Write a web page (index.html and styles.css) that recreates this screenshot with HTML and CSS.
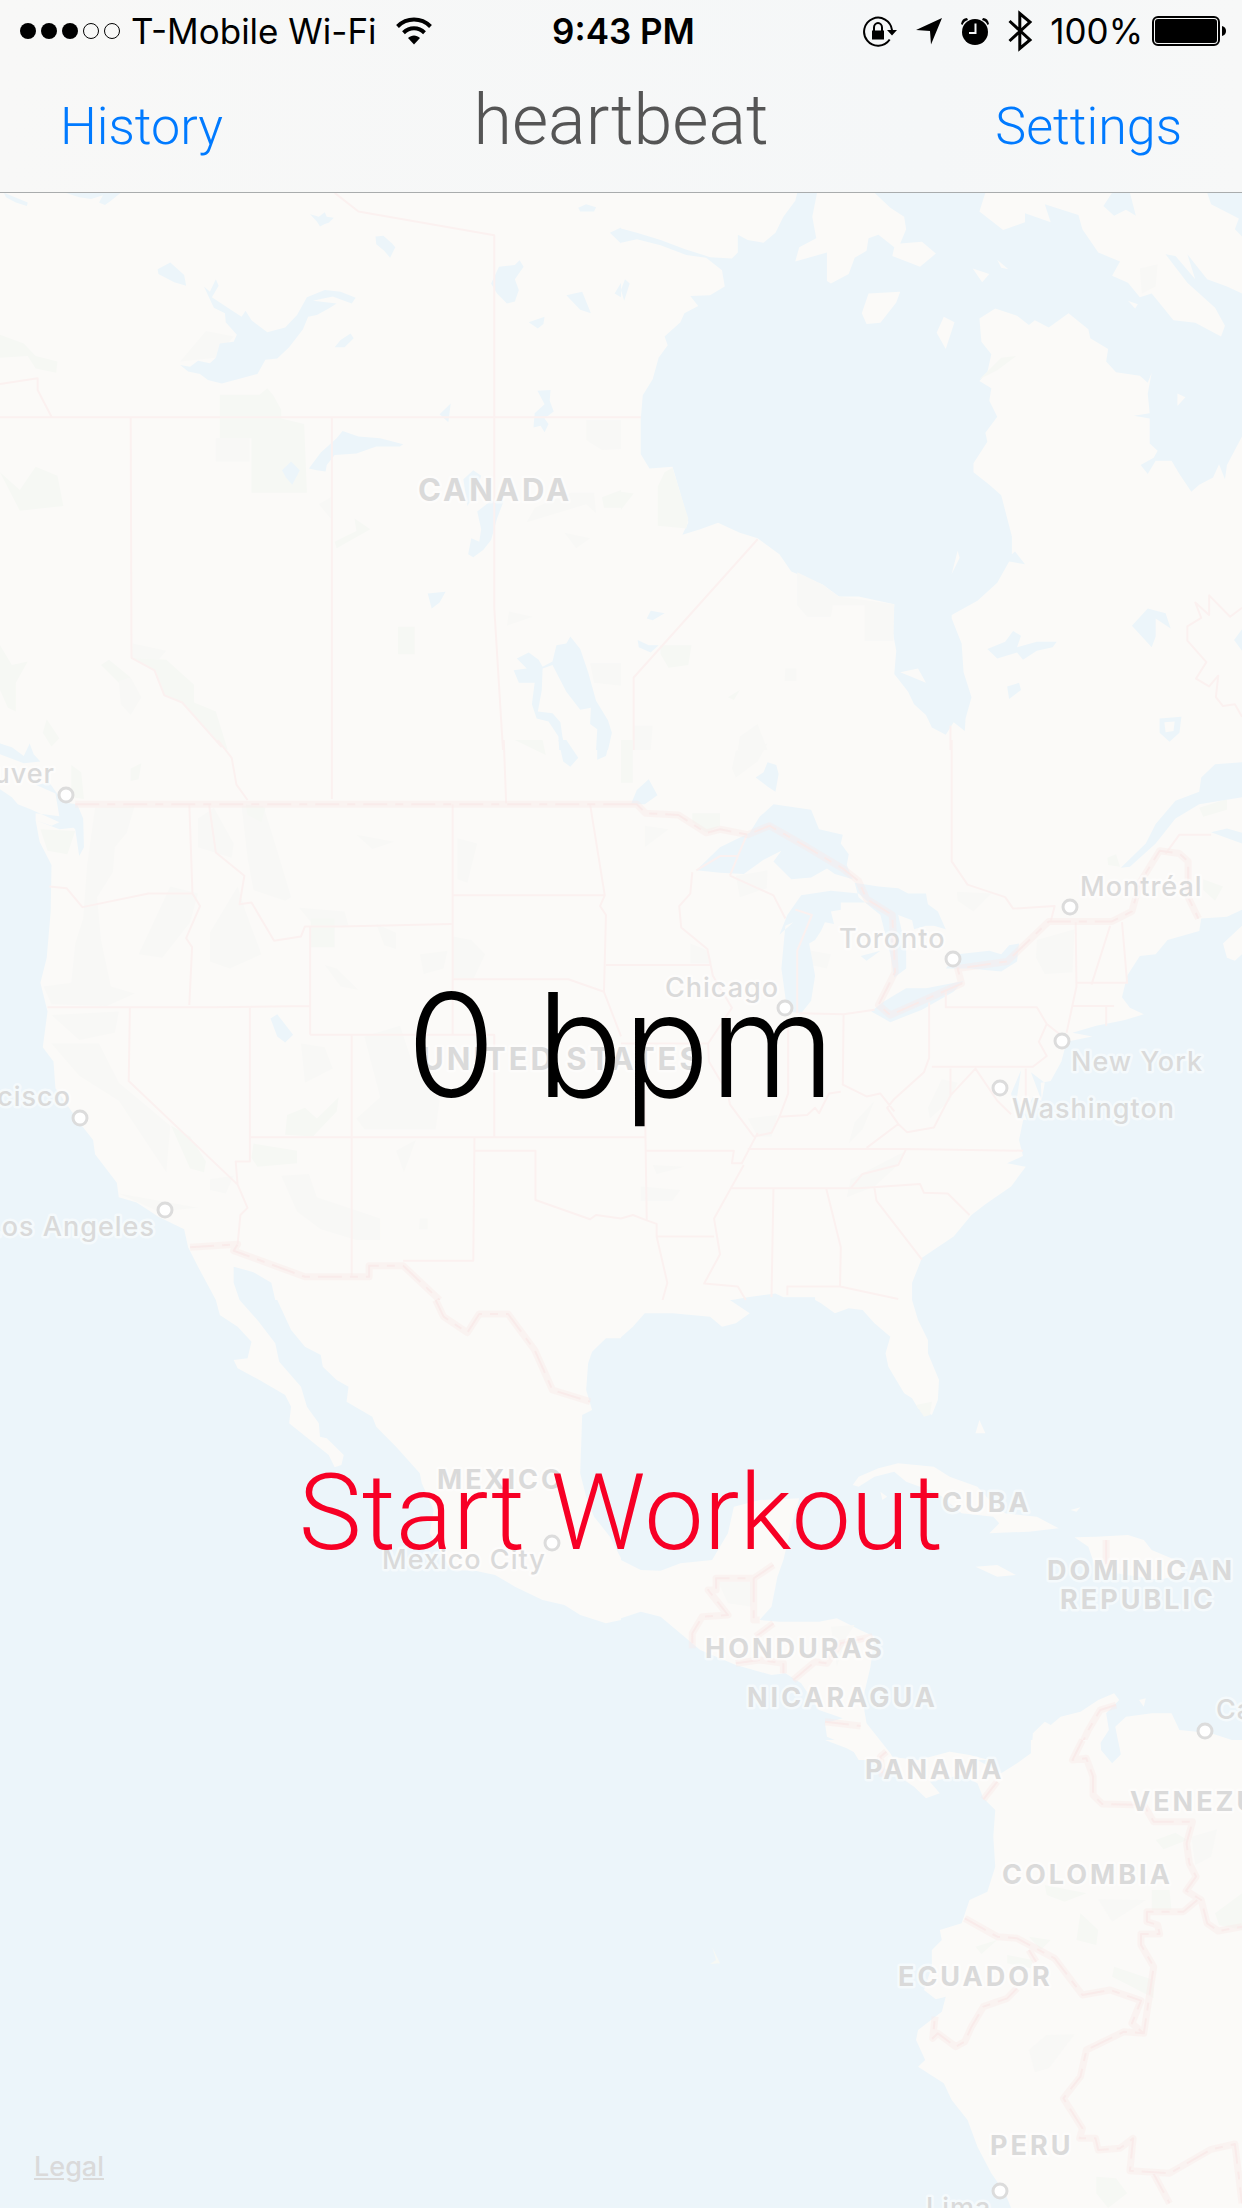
FILE: index.html
```html
<!DOCTYPE html>
<html lang="en">
<head>
<meta charset="utf-8">
<meta name="viewport" content="width=device-width, initial-scale=1">
<title>heartbeat</title>
<link rel="stylesheet" href="styles.css">
</head>
<body>
<div class="screen">
  <svg class="map" viewBox="0 0 1242 2208" preserveAspectRatio="xMidYMid slice" role="img" aria-label="Map of North America">
    <rect class="land" width="1242" height="2208"/>
    <rect class="water" y="1300" width="1242" height="908"/>

    <!-- Northern Canada, west -->
    <g transform="translate(0 190) scale(.39605 .35714)">
      <path class="park" d="M555 573H655L675 555 690 575 710 615V640L768 655 775 848H635V695H555ZM0 405L60 430 90 465 145 480 142 512 90 500 70 465 0 470ZM0 790L50 840 90 775 145 800 160 885 50 898ZM845 985L900 955 895 920 935 950 850 1003ZM1005 1223H1047V1300H1005ZM0 1275L30 1330 70 1320 40 1380V1460L20 1450 0 1400ZM332 1310L420 1315 490 1385 490 1435 545 1460 575 1568 560 1560 460 1435 415 1415 390 1345ZM1520 860L1568 840V890H1525ZM118 1482L150 1535 130 1558 108 1520ZM255 1330L275 1315 330 1365 300 1380Z"/>
      <path class="hill" d="M455 480L520 395 590 410 545 470ZM545 695H630V760H545ZM335 1270L420 1290 400 1315 332 1310ZM300 1375L330 1365 357 1420 330 1470 305 1440ZM1480 645H1568V725L1520 728 1480 700ZM1440 848H1500L1505 905 1480 880 1330 930 1350 890ZM805 880L835 860V920ZM1285 1180L1345 1195 1280 1220ZM1425 960L1490 975 1455 1003ZM1490 1325H1568V1388L1500 1380Z"/>
      <path class="water" d="M10 8L70 35 68 45 40 35 15 20ZM165 8H305L280 30 265 42 250 35 260 15 230 25 200 20ZM783 68L805 75 820 62 825 75 843 78 830 92 820 95 808 102 800 88ZM948 130L968 128 990 150 998 160 985 190 970 170 950 152ZM398 222L430 203 465 238 470 268 440 258 400 235Z"/>
      <path class="water" d="M515 270L530 285 545 250 552 268 535 300 575 330 610 355 620 338 635 365 675 398 720 385 750 350 775 300 820 280 860 285 898 302 888 318 840 298 790 310 850 318 830 332 800 350 778 355 765 390 730 440 700 472 670 475 650 515 600 530 560 542 525 532 505 515 475 508 455 490 480 495 500 478 530 485 545 470 555 430 590 425 598 405 570 370 568 345 540 330Z"/>
      <path class="water" d="M845 440L860 420 885 402 893 415 870 440ZM1240 262L1260 215 1300 210 1312 197 1322 215 1300 250 1310 280 1300 312 1280 318 1255 290ZM1430 295L1470 285 1492 345 1465 335ZM1335 370L1375 355 1372 375 1358 388ZM1460 50L1480 40 1505 48 1500 60 1465 60ZM1540 120L1568 105V150ZM1552 290L1568 260V300ZM1357 562L1390 560 1388 590 1398 620 1375 640 1385 655 1375 678 1365 660 1347 665 1350 625 1375 600ZM1110 628L1138 598 1132 650ZM780 780L810 735 850 695 865 675 905 690 960 695 1018 712 1010 718 950 718 900 738 845 742 825 770 822 788 800 785ZM712 785L735 760 757 785 738 825 722 805ZM1170 810L1195 785 1215 800 1200 850 1180 885ZM1205 900L1240 870H1272L1255 920 1240 980 1220 1008 1195 1028 1182 1020 1190 975 1210 985 1215 950ZM1080 1130L1125 1125 1110 1155 1090 1172Z"/>
      <path class="water" d="M1305 1312L1335 1295 1360 1315 1370 1335 1395 1320 1405 1275 1430 1270 1440 1250 1465 1285 1485 1350 1505 1430 1535 1485 1545 1520 1535 1568H1505L1508 1510 1490 1495 1492 1450 1465 1455 1430 1405 1395 1330 1370 1340 1368 1400 1358 1460 1395 1465 1415 1490 1420 1530 1428 1568H1412L1410 1530 1385 1488 1355 1480 1343 1440 1350 1380 1310 1380 1297 1345 1330 1340ZM0 1550L25 1565 0 1568Z"/>
      <path class="state" d="M0 543L95 527V560L130 635M0 636H1568M330 636L332 1310 390 1345 415 1415 460 1435 560 1560M838 636V1568M845 8L905 60 1248 127V1170L1270 1568"/>
    </g>

    <!-- Hudson Bay -->
    <g transform="translate(621 190) scale(.39605 .35714)">
      <path class="water" d="M445 8L440 30 410 75 390 120 360 148 320 140 295 125V175L280 192 225 188 160 165 100 140 40 120 0 108V148L40 138 100 155 165 182 215 190 255 225 262 270 225 295 175 297 195 325 160 345 150 370 110 410 118 435 95 470 80 530 55 575 50 640V740L72 780 130 775 150 850 170 930 155 965 200 950 245 932 300 960 345 975 400 1020 430 1068 510 1105 550 1138 600 1138 690 1160 685 1230 695 1290 690 1355 725 1405 740 1440 770 1470 785 1505 820 1525 840 1490 868 1515 870 1480 885 1420 865 1350 860 1270 835 1200V1190L900 1150 950 1100 980 1040 1020 1048 995 1012 987 1020V970L960 855 930 825 890 790V765L925 705 920 680 950 635 930 590 935 555 905 535 925 510 935 460 910 425 905 360 945 332 1000 352 1030 378 1045 365 1080 385 1130 345 1180 390 1185 415 1230 445 1225 480 1250 510 1310 520 1330 540 1340 512 1330 570 1335 625 1295 632 1335 640V710L1355 730 1345 750 1312 770 1330 795 1350 758H1390L1410 795 1440 845 1460 825 1495 805 1510 768 1525 810 1530 770 1568 690V290L1530 270 1480 250 1430 180 1450 250 1400 185 1375 180 1430 260 1500 330 1525 380 1515 410 1450 372 1395 365 1340 290 1310 300 1280 260 1240 240 1260 200 1205 175 1165 110 1155 70 1070 40 1085 90 1020 65V90L965 112 905 60 920 8H640L680 50 715 75 720 110 705 150 760 145 795 178 755 215 685 185 690 160 650 125 625 135 620 170 590 190 575 235 530 262 520 255V175L440 200 450 160 493 135 483 75 495 8ZM1480 8L1490 40 1560 80 1550 110 1568 130V8ZM1240 8L1218 45 1245 72 1275 55 1300 72 1285 8ZM925 1285L970 1265 990 1235 1010 1248 1000 1280 1050 1265H1100L1090 1280 1050 1290 1015 1315 1000 1295 950 1312ZM1290 1220L1330 1172 1375 1185 1388 1228 1350 1200V1250L1340 1280ZM975 1390L1005 1380 1010 1400 980 1425ZM1360 1480L1415 1475 1410 1520 1385 1545 1360 1520ZM65 1200L75 1178 110 1185 80 1205ZM42 1260L70 1275H95L75 1295 45 1280ZM1548 1260L1568 1230V1290ZM0 280L10 250 22 262 8 310Z"/>
      <path class="land" d="M625 290L705 285 695 315 655 372 620 375 608 345ZM815 355L842 370 820 445 797 400ZM888 220L930 235 912 258ZM950 195L978 222 960 218ZM705 1350L750 1340 770 1380ZM850 1010L855 1030 835 1075ZM1405 570L1425 580 1405 605ZM1280 310L1305 320 1298 332ZM1372 1490L1398 1488 1395 1515 1375 1518Z"/>
      <path class="park" d="M110 790L130 778 150 850 170 920 165 948 93 940V830ZM905 530L960 470 998 465 950 505ZM0 845L32 850 0 895ZM100 1275H178L170 1330 120 1338 100 1300ZM270 1420L300 1400 285 1428Z"/>
      <path class="hill" d="M445 1070L510 1105 550 1138 690 1160 688 1262H615V1163H535L530 1195H470L445 1163ZM415 1340H443V1375H413ZM1310 220L1355 208 1350 270 1315 290ZM295 1568L300 1530 345 1495 370 1568ZM30 1500L80 1500 75 1568H30Z"/>
      <path class="state" d="M0 636H50M345 978L32 1365V1568M832 1500V1568M1568 1170L1538 1195 1485 1135V1190L1450 1155 1465 1198 1430 1222V1262L1478 1322 1452 1368 1485 1390 1508 1360 1502 1420 1520 1445 1550 1440 1568 1475"/>
    </g>

    <!-- Western United States -->
    <g transform="translate(0 740) scale(.39605 .35714)">
      <path class="hill" d="M240 190L340 185 320 260 290 300 285 370 245 440 255 560 280 690 340 710 270 745 130 740 110 690 180 680 190 570 210 500 220 350ZM500 220L540 190 590 290 585 330 500 300ZM610 185H665L700 310 735 440 720 450 640 420 625 330ZM530 540L600 410 620 480 660 600 580 640 530 620ZM430 410L500 430 480 510 410 610 350 600ZM755 470L870 480 880 520 800 530ZM950 515L1000 540V585L970 575ZM1060 600L1130 590 1120 640 1070 655ZM1143 550L1190 560 1225 600 1195 670H1143ZM1155 275L1205 290 1180 400 1155 390ZM900 265L995 285 940 305ZM130 770L300 760 290 820 200 840ZM130 850L250 850 300 960 430 1080 420 1210 300 1010 200 940ZM300 1270L500 1310 400 1320ZM530 1230L590 1220 570 1270 530 1260ZM710 1220L780 1215 800 1280 960 1340V1400L900 1400 810 1370 750 1320ZM920 830L1010 800 1040 900 1110 1010 1100 1090 920 1090 900 1060 960 1000ZM1000 1150L1050 1120 1020 1210ZM760 850L820 860 840 920 770 960ZM1060 1340H1080V1370H1058ZM820 630L850 640 905 700 860 690Z"/>
      <path class="park" d="M102 250L190 255 170 320 120 310ZM785 500H845V580H785ZM180 70L205 90 212 165 180 160ZM330 80L357 65 350 110 330 115ZM725 1050L770 1030 800 1060 855 1000 850 1040 790 1110 720 1105ZM640 1130L750 1150V1185L650 1195 635 1170ZM432 1080L480 1110 520 1180 515 1210 480 1200ZM620 180L670 190 660 230 625 210ZM1300 0H1370L1378 42Z"/>
      <path class="water" d="M0 138L30 160 45 180 80 195 150 230 130 240 90 225 100 285 130 350 128 480 118 610 102 680 120 760 108 860 135 900 140 975 200 1070 235 1120 240 1160 295 1240 300 1280 345 1295 400 1335 465 1370 475 1420 500 1475 545 1568H0ZM90 125L140 150 150 215 190 250 200 325 212 300 210 220 195 180 160 175 125 120ZM90 225L150 250 190 245 160 215 90 205ZM0 10L30 20 60 45 75 10 85 40 102 60 60 65 0 40ZM683 780L700 768 740 825 720 847 700 830ZM590 1475L640 1490 685 1520 695 1568H605L590 1520ZM1410 0H1430L1460 50 1440 75 1422 60ZM1508 0H1540L1530 45 1508 55Z"/>
      <path class="state" d="M478 180L486 430 505 465 470 555 485 580 478 742M125 410L168 415 208 468 375 430H486M528 182L545 315 617 380 605 460 635 455 692 562 760 550 770 522H860L1140 515M783 522V825M1143 180V825M1490 180L1527 435 1515 465 1530 490 1525 705 1568 830M1143 435H1527M1143 670H1435L1525 705M120 748H540L783 745M328 748L325 955 600 1245 625 1310 607 1330 600 1412M631 748V1180H595L600 1245M783 825H1248V1112M888 825V1500M631 1112H1568M1198 1112L1195 1458H1018M1200 1150H1352V1288L1490 1342 1505 1330 1568 1340M838 0V165M1272 0L1278 178M550 0L585 50 597 125 625 168M1530 630H1568"/>
      <path class="nation" d="M190 180H1568M480 1420L600 1412 590 1430 770 1503H932V1472H1018L1110 1568"/>
      <path class="nation-line" d="M190 180H1568M480 1420L600 1412 590 1430 770 1503H932V1472H1018L1110 1568"/>
    </g>

    <!-- Great Lakes and the East Coast -->
    <g transform="translate(621 740) scale(.39605 .35714)">
      <path class="hill" d="M290 30L370 10 345 60 290 105 280 80ZM60 240L120 250 60 300ZM290 380L370 365 368 415 300 440ZM848 425L935 430 890 480 850 450ZM1050 560L1145 530 1140 650 1070 655 1048 610ZM175 570L220 590 230 625 175 625ZM810 950L850 960 830 1010 780 1060 775 1030ZM590 1070L640 1010 610 1090 575 1130ZM320 1060L395 1050 380 1110 345 1110ZM580 1230L720 1150 690 1200 640 1250 570 1280ZM50 1250L150 1260 130 1290 50 1290ZM80 1190L160 1195 90 1215ZM480 590L530 600 520 640 480 630Z"/>
      <path class="park" d="M180 205H250V240L215 260 180 230ZM1460 190L1530 165V195L1470 215ZM1228 330L1250 320 1260 355 1230 350ZM1470 390L1520 410 1500 450 1470 420ZM0 0H30V120H0Z"/>
      <path class="water" fill-rule="evenodd" d="M190 365L250 300 325 260 350 215 385 180 480 195 500 250 560 265 555 290 575 320 570 350 585 390 540 375 520 360 480 385 430 390 385 340 405 310 360 335 310 375 250 372ZM400 545L420 490 455 435 530 422 600 430 625 455 555 455 555 475 530 480 538 515 515 510 505 535 490 560 475 570 482 610 490 660 480 730 455 765 420 760 405 640 415 520 435 510ZM590 400L650 410 700 415 725 430 770 430 775 460 800 480 820 530 790 520 770 520 740 530 735 505 700 490 720 590 720 640 690 665 680 600 655 490 600 440ZM605 605L655 590 620 618ZM820 640L850 600 930 590 960 600 980 575 1005 570 1000 620 960 648 880 640ZM632 760L660 735 690 715 720 695 770 695 865 675 840 705 760 755 680 790ZM340 105L360 90 370 62 392 70 398 95 390 145 370 130ZM25 180L40 140 70 110 92 155 60 180ZM1568 62L1500 68 1465 105 1460 145 1400 170 1350 235 1325 290 1262 358 1285 355 1350 290 1400 220 1460 180 1568 160ZM1490 258L1530 248 1568 260V290ZM1568 475L1530 495 1465 500 1460 535 1380 560 1350 600 1310 605 1278 660 1265 720 1285 750 1320 768 1270 785 1200 800 1140 820 1190 830 1125 845 1112 900 1085 955 1060 960 1062 1010 1040 1000 1020 1040 1005 1120 1015 1165 975 1185 1022 1195 985 1250 920 1300 885 1330 840 1390 760 1450 735 1520V1568H1568V600L1550 618 1530 610 1520 570 1568 520ZM1010 925L985 990 1000 1060 1025 1065 1000 1000ZM1035 930L1070 960 1062 1010ZM280 1568L320 1560 390 1550 410 1560H490V1568Z"/>
      <path class="state" d="M835 0V340L875 405 970 440 990 472 1095 465 1085 508M1375 318L1410 265H1490M1148 510L1150 690 1125 820M1265 510L1278 680H1152M1235 520L1188 685M1140 745H1245M1225 745V800M820 700V748H1050L1075 795 1055 845 1075 885 1040 915H785M778 735V890L765 930 690 1005 672 1030 700 1075 620 1142M1075 795L1115 830M1022 920V1000M832 920V995L790 1085 722 1098 700 1075M832 995L895 920 950 1010 985 1048M562 770L560 965 620 998 655 990 690 1040M450 765L562 768 640 755M422 780V990L400 1055 470 1050 490 1030 500 1045 525 990 555 985M180 370L175 430 147 465 152 525 218 585 232 660 280 750 220 850 222 900 270 990 275 1020 335 1110 380 1100 400 1055M0 630H225M0 850H220M60 980L65 1345 90 1355V1390L117 1520 105 1568M0 1112H60M62 1150H285L280 1185H305L345 1100M320 1145H720L1015 1150M280 1255H600L755 1243 765 1268 825 1270 880 1330M310 1190L235 1340 250 1440 210 1522 295 1530 315 1568M90 1390H235M385 1255L380 1560M518 1255L555 1420 553 1530H420V1555M553 1530L700 1565M640 1255L645 1290 760 1455M720 1145L700 1190 610 1215 580 1255M275 380L385 435 415 500M190 365L250 325H295L275 380M318 265L295 325M440 475L482 490 445 590V765M0 1340L30 1330 65 1345"/>
      <path class="nation" d="M0 180H40L62 205 145 210 215 260 250 250 320 265 375 240 470 300 560 360 600 395 620 445 685 490 692 650 650 742 680 770 860 682 850 640 975 620 1080 508H1240L1290 480 1310 400 1360 310 1410 318 1432 340V440L1458 500"/>
      <path class="nation-line" d="M0 180H40L62 205 145 210 215 260 250 250 320 265 375 240 470 300 560 360 600 395 620 445 685 490 692 650 650 742 680 770 860 682 850 640 975 620 1080 508H1240L1290 480 1310 400 1360 310 1410 318 1432 340V440L1458 500"/>
    </g>

    <!-- Mexico -->
    <g transform="translate(0 1300) scale(.39605 .33333)">
      <path class="land" d="M545 0H605L650 60 695 130 705 185 760 260 775 320 805 370 808 410 825 415 868 465 862 495 845 502 830 465 730 370 735 320 720 285 655 240 600 205 590 180 625 175 635 125 600 80 555 45ZM700 0H1568V115H1530L1495 155 1485 190 1480 270 1495 330 1470 345 1465 520 1480 590 1500 650 1540 710 1568 775V960L1530 970 1465 945 1425 915 1370 900 1300 860 1250 825 1200 812 1140 810 1085 700 1095 630 1065 550 1060 520 1000 440 950 380 940 350 875 305 880 260 850 240 815 200 810 165 770 140 735 90Z"/>
      <path class="nation" d="M1100 0L1120 50 1180 98 1210 42H1283L1350 150 1395 270 1490 305"/>
      <path class="nation-line" d="M1100 0L1120 50 1180 98 1210 42H1283L1350 150 1395 270 1490 305"/>
    </g>

    <!-- Caribbean and Central America -->
    <g transform="translate(621 1300) scale(.39605 .33333)">
      <path class="land" d="M0 0H275L325 40 290 70 255 80 225 50 130 40 60 40 30 80 0 112ZM490 0H735L750 60 775 120V160L803 240 800 300 785 345 750 325 735 295 715 280 690 230 675 200 668 160 680 110 640 70 610 30 575 25 540 40 505 10ZM0 780L50 810 100 812 150 790 230 780 270 700 285 620 350 600 450 595 430 680 410 780 395 830 380 920 350 960 400 965H500L545 955 595 985 640 1010 630 1100 610 1200 620 1270 680 1360 690 1380H600L580 1340 520 1310 515 1270 560 1255 500 1230 455 1150 415 1120 380 1125 290 1095 200 1050 100 950 50 935 0 955ZM770 1380L830 1355 880 1365 930 1380ZM1035 1380L1040 1300 1070 1265 1085 1275 1110 1250 1160 1235 1205 1200 1245 1180 1258 1200 1225 1240 1232 1290 1210 1330 1215 1380ZM1265 1380L1248 1280 1275 1250 1340 1240H1390L1410 1290 1490 1300 1568 1330V1380ZM585 555L600 530 650 505 700 490 790 500 830 530 900 560 930 600 970 640 1050 650 1105 685 1030 695 930 700 955 670 940 650 860 640 800 580 720 545 690 515 640 530 600 560ZM655 575L672 590 660 600ZM1145 712L1200 710 1280 705 1320 720 1340 750 1400 780 1420 820 1360 840 1250 820 1200 810 1180 740ZM895 800L950 795 997 825 950 830ZM905 360L920 400 895 400ZM1135 630L1160 622 1150 635ZM1308 1200L1325 1195 1320 1220Z"/>
      <path class="hill" d="M245 845H330V920L270 910ZM530 980L590 975 570 1010 545 1100Z"/>
      <path class="park" d="M745 315L785 305 780 345 765 350ZM610 1340H650V1370Z"/>
      <path class="nation" d="M385 795L335 835H240V870L220 870 270 945 205 950 180 1000V1045M335 835V960H350M385 970L340 1010M290 1090L350 1080 410 1090V1120M435 1140L490 1085 520 1090 555 1030 635 1010M515 1265L605 1278M1225 720V800M1250 1215L1210 1230 1180 1290 1145 1380"/>
      <path class="nation-line" d="M385 795L335 835H240V870L220 870 270 945 205 950 180 1000V1045M335 835V960H350M385 970L340 1010M290 1090L350 1080 410 1090V1120M435 1140L490 1085 520 1090 555 1030 635 1010M515 1265L605 1278M1225 720V800M1250 1215L1210 1230 1180 1290 1145 1380"/>
    </g>

    <!-- South America -->
    <g transform="translate(621 1740) scale(.39605 .33333)">
      <path class="land" d="M515 0H640L680 50 750 60 830 35 900 60 960 100 1000 70 1035 40V0H1210L1212 30 1240 70 1265 40V0H1568V1404H985L970 1360 935 1300 900 1220 875 1140 835 1080 815 1030 750 980 768 960 745 900 750 870 810 815 820 770 795 778 765 750 785 680V630L810 600 805 570 860 550 880 480 925 455 945 380 940 290 945 210 915 175 900 130 860 105 780 125 805 160 770 175 740 140 690 100 640 70 570 25Z"/>
      <path class="park" d="M1350 300L1400 278 1430 300 1370 328ZM1070 435L1175 460 1120 485 1075 465ZM1340 450H1385L1390 510H1340ZM1500 520L1568 460V570L1510 555ZM1160 520L1205 570 1200 615 1150 600ZM1030 590L1085 600 1060 630ZM895 620L950 600 910 642ZM975 645L1040 660 1035 685 975 670ZM1245 680L1345 720V775L1290 740 1240 710ZM1200 1310L1250 1315 1278 1360 1230 1404 1200 1360ZM230 620L250 670 225 672 240 660Z"/>
      <path class="hill" d="M1440 290L1505 268 1490 350 1450 375ZM1205 478L1325 480 1240 545ZM1030 930L1075 885 1145 883 1080 985 1045 997Z"/>
      <path class="nation" d="M1165 0L1140 60 1175 55 1192 110V165L1215 192 1320 195 1345 245H1443L1428 310 1435 370 1452 410 1427 452 1465 480 1480 550 1508 573 1568 560M1455 480L1420 515H1328V545L1355 555 1360 582H1313V615L1345 680 1320 880 1270 875 1175 930 1160 1010 1117 1075 1165 1165 1158 1195H1198L1205 1230 1260 1225 1293 1195 1285 1292 1385 1300 1490 1228 1550 1212 1568 1390M1342 1295L1385 1390M868 535L950 590 1000 595 1095 655 1165 765 1235 750 1313 782 1290 850 1320 880M1030 630L1048 665M1000 745L975 775 915 800 885 860 868 905 845 920 800 880 787 895 793 830M670 35L655 50 660 110M950 125L915 178"/>
      <path class="nation-line" d="M1165 0L1140 60 1175 55 1192 110V165L1215 192 1320 195 1345 245H1443L1428 310 1435 370 1452 410 1427 452 1465 480 1480 550 1508 573 1568 560M1455 480L1420 515H1328V545L1355 555 1360 582H1313V615L1345 680 1320 880 1270 875 1175 930 1160 1010 1117 1075 1165 1165 1158 1195H1198L1205 1230 1260 1225 1293 1195 1285 1292 1385 1300 1490 1228 1550 1212 1568 1390M1342 1295L1385 1390M868 535L950 590 1000 595 1095 655 1165 765 1235 750 1313 782 1290 850 1320 880M1030 630L1048 665M1000 745L975 775 915 800 885 860 868 905 845 920 800 880 787 895 793 830M670 35L655 50 660 110M950 125L915 178"/>
    </g>

    <g class="cities">
      <circle cx="66" cy="795" r="7"/><circle cx="80" cy="1118" r="7"/><circle cx="165" cy="1210" r="7"/>
      <circle cx="785" cy="1008" r="7"/><circle cx="953" cy="959" r="7"/><circle cx="1070" cy="907" r="7"/>
      <circle cx="1062" cy="1041" r="7"/><circle cx="1000" cy="1088" r="7"/><circle cx="552" cy="1543" r="7"/>
      <circle cx="1205" cy="1731" r="7"/><circle cx="1000" cy="2191" r="7"/>
    </g>
    <g class="city">
      <text class="end" x="55" y="783">Vancouver</text>
      <text class="end" x="71" y="1106">San Francisco</text>
      <text class="end" x="155" y="1236">Los Angeles</text>
      <text x="665" y="997">Chicago</text>
      <text x="839" y="948">Toronto</text>
      <text x="1080" y="896">Montréal</text>
      <text x="1071" y="1071">New York</text>
      <text x="1012" y="1118">Washington</text>
      <text x="382" y="1569">Mexico City</text>
      <text x="1216" y="1719">Caracas</text>
      <text x="926" y="2217">Lima</text>
    </g>
    <g class="country">
      <text class="large" x="418" y="501">CANADA</text>
      <text class="large" x="421" y="1070">UNITED STATES</text>
      <text x="437" y="1489">MEXICO</text>
      <text x="942" y="1512">CUBA</text>
      <text x="1047" y="1580">DOMINICAN</text>
      <text x="1060" y="1609">REPUBLIC</text>
      <text x="705" y="1658">HONDURAS</text>
      <text x="747" y="1707">NICARAGUA</text>
      <text x="865" y="1779">PANAMA</text>
      <text x="1130" y="1811">VENEZUELA</text>
      <text x="1002" y="1884">COLOMBIA</text>
      <text x="898" y="1986">ECUADOR</text>
      <text x="990" y="2155">PERU</text>
    </g>
  </svg>

  <header class="top">
    <div class="status">
      <div class="status-left">
        <svg class="signal" width="102" height="18" viewBox="0 0 102 18" aria-hidden="true">
          <circle cx="9" cy="9" r="8"/><circle cx="30" cy="9" r="8"/><circle cx="51" cy="9" r="8"/>
          <circle class="off" cx="72" cy="9" r="7.5"/><circle class="off" cx="93" cy="9" r="7.5"/>
        </svg>
        <span class="carrier">T-Mobile Wi-Fi</span>
        <svg width="38" height="28" viewBox="0 0 38 28" aria-hidden="true">
          <path class="wifi-arc" d="M2.500 9.500C12 .3 26 .3 35.500 9.500M8.500 15.700C14.500 9.800 23.500 9.800 29.500 15.700"/>
          <path d="M19 27.500L13 21C16.500 17.600 21.500 17.600 25 21Z"/>
        </svg>
      </div>
      <time class="clock">9:43 PM</time>
      <div class="status-right">
        <svg width="36" height="32" viewBox="0 0 36 32" aria-hidden="true">
          <path class="thin" d="M27.700 24.500A14 14 0 1 1 30 15"/>
          <path d="M25 15H35L30 20.500ZM10 15.500H22V24.500H10Z"/>
          <path class="shackle" d="M12 16V12.500A4 4.500 0 0 1 20 12.500V16"/>
        </svg>
        <svg width="28" height="28" viewBox="0 0 28 28" aria-hidden="true"><path d="M27 1L16 27.500 15 14 1 13Z"/></svg>
        <svg width="30" height="30" viewBox="0 0 30 30" aria-hidden="true">
          <circle cx="15" cy="16" r="13"/>
          <path d="M1 8Q2 2 7 2L8 4Q4 5 2.500 9ZM29 8Q28 2 23 2L22 4Q26 5 27.500 9Z"/>
          <path class="hands" d="M15.500 7.500V17H9"/>
        </svg>
        <svg width="26" height="42" viewBox="0 0 26 42" aria-hidden="true"><path class="bluetooth" d="M2.500 11L23 30 12.800 38.500V3.500L23 12 2.500 31"/></svg>
        <span>100%</span>
        <svg class="battery" width="76" height="30" viewBox="0 0 76 30" aria-hidden="true">
          <rect class="thin" x="1" y="1" width="66" height="28" rx="5"/>
          <rect x="3" y="3" width="62" height="24" rx="3"/>
          <path d="M70 10Q74 11 74 15T70 20Z"/>
        </svg>
      </div>
    </div>
    <nav class="nav">
      <a class="nav-link" href="#history">History</a>
      <h1 class="title">heartbeat</h1>
      <a class="nav-link nav-right" href="#settings">Settings</a>
    </nav>
  </header>

  <main class="workout">
    <p class="rate">0 bpm</p>
    <button class="start" type="button">Start Workout</button>
  </main>

  <footer class="footer"><a class="legal" href="#legal">Legal</a></footer>
</div>
</body>
</html>
```
FILE: styles.css
```css
* { box-sizing: border-box; }

body {
  margin: 0;
  background: #ecf5fa;
  color: #000;
  font-family: Roboto, "Liberation Sans", sans-serif;
  font-weight: 300;
}

.screen {
  position: relative;
  display: flex;
  flex-direction: column;
  min-height: 100vh;
  overflow: hidden;
}

/* Map backdrop */
.map {
  position: absolute;
  inset: 0;
  width: 100%;
  height: 100%;
}
.land { fill: #fbfaf8; }
.water { fill: #ecf5fa; }
.park { fill: #f6f8f4; }
.hill { fill: #f8f8f6; }
.state, .nation, .nation-line {
  fill: none;
  stroke-linejoin: round;
  vector-effect: non-scaling-stroke;
}
.state { stroke: #fbf1f0; stroke-width: 2; }
.nation { stroke: #faebe9; stroke-width: 7; opacity: .4; }
.nation-line { stroke: #f9ebea; stroke-width: 2; stroke-dasharray: 24 8 8 8; }
.cities { fill: #fff; stroke: #dcdcdc; stroke-width: 3; }
.city, .country {
  fill: #dadada;
  font-family: Inter, "Liberation Sans", sans-serif;
  font-size: 27px;
  stroke: rgba(255, 255, 255, .5);
  stroke-width: 5;
  stroke-linejoin: round;
  paint-order: stroke;
}
.city { font-weight: 500; letter-spacing: 1px; }
.country { font-weight: 700; letter-spacing: 3px; }
.large { font-size: 31px; }
.end { text-anchor: end; }

/* Status bar and navigation */
.top {
  position: relative;
  background: linear-gradient(90deg, #f8f8f7, #f5f7f8 75%, #f7f8f8);
  border-bottom: 1px solid #a9acad;
}
.status {
  display: grid;
  grid-template-columns: 1fr auto 1fr;
  align-items: center;
  height: 62px;
  padding: 0 14px 0 19px;
  font-family: Inter, "Liberation Sans", sans-serif;
  font-size: 35px;
  font-weight: 400;
}
.status-left, .status-right {
  display: flex;
  align-items: center;
  gap: 10px;
}
.status-right { justify-content: flex-end; gap: 17px; }
.carrier { margin-right: 8px; }
.battery { margin-left: -8px; }
.clock { font-weight: 600; }
.thin, .off, .wifi-arc, .shackle, .hands, .bluetooth { fill: none; stroke: #000; }
.thin { stroke-width: 2; }
.off { stroke-width: 1; }
.wifi-arc { stroke-width: 4; }
.shackle { stroke-width: 2; }
.hands { stroke: #f6f7f8; stroke-width: 2; }
.bluetooth { stroke-width: 3; }
.nav {
  display: grid;
  grid-template-columns: 1fr auto 1fr;
  align-items: baseline;
  height: 130px;
  padding: 17px 60px 0;
}
.nav-link {
  color: #007aff;
  font-size: 52px;
  text-decoration: none;
}
.nav-right { text-align: right; }
.title {
  margin: 0;
  color: #555;
  font-size: 70px;
  font-weight: 300;
}

/* Workout readout */
.workout {
  position: relative;
  flex: 1;
  display: flex;
  flex-direction: column;
  align-items: center;
  justify-content: center;
  gap: 312px;
  padding-top: 216px;
}
.rate {
  margin: 0;
  font-family: Inter, "Liberation Sans", sans-serif;
  font-size: 144px;
  line-height: 180px;
}
.start {
  padding: 0;
  border: 0;
  background: none;
  color: #f70025;
  font: inherit;
  font-size: 106px;
  line-height: 132px;
}

.footer {
  position: relative;
  height: 84px;
  padding: 26px 34px;
  font-family: Inter, "Liberation Sans", sans-serif;
}
.legal { color: #dadada; font-size: 27px; font-weight: 500; }
```
